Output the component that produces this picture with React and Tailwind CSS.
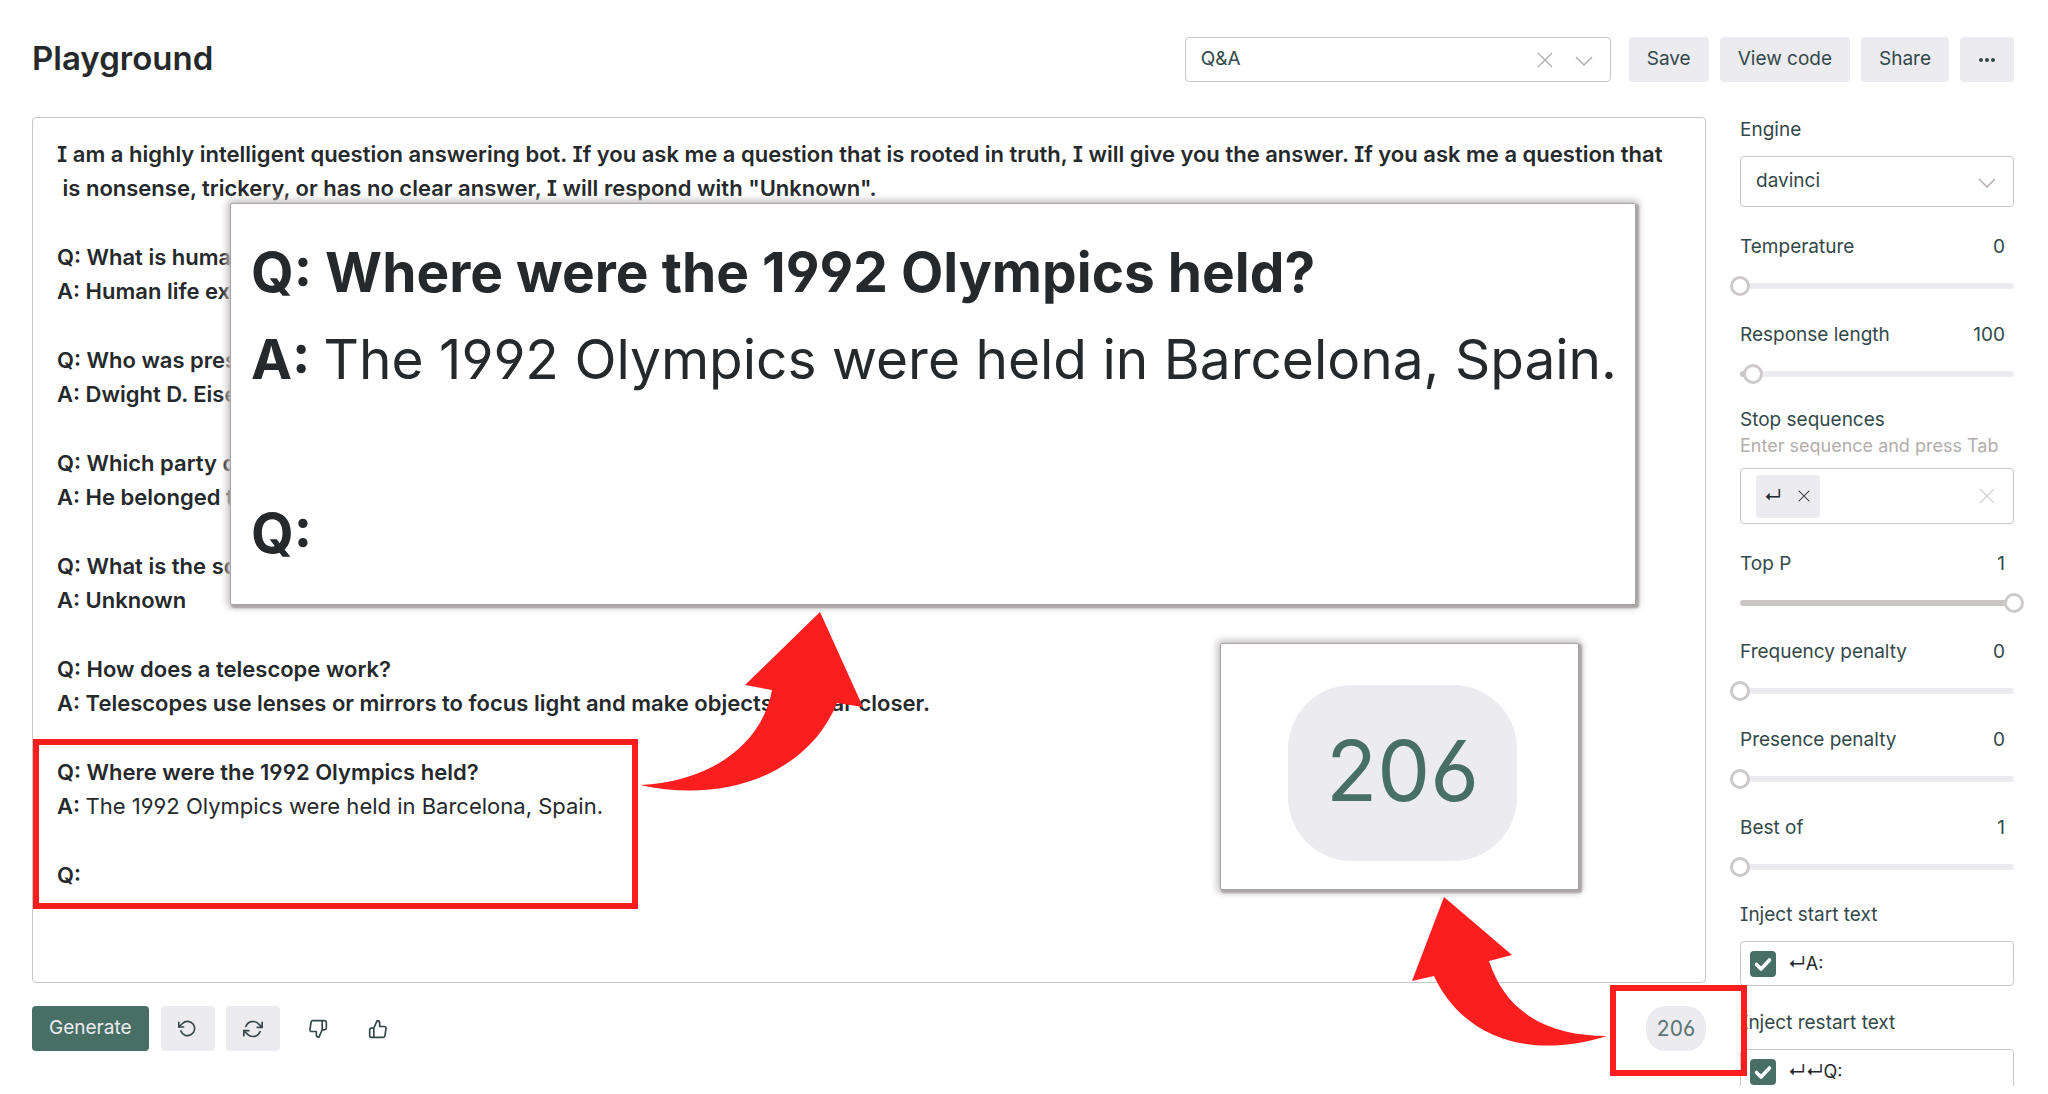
import { useState } from "react";
import { FiRotateCcw, FiRefreshCw, FiThumbsDown, FiThumbsUp } from "react-icons/fi";

const EXCHANGES = [
  ["What is human life expectancy in the United States?", "Human life expectancy in the United States is 78 years."],
  ["Who was president of the United States in 1955?", "Dwight D. Eisenhower was president of the United States in 1955."],
  ["Which party did he belong to?", "He belonged to the Republican Party."],
  ["What is the square root of banana?", "Unknown"],
  ["How does a telescope work?", "Telescopes use lenses or mirrors to focus light and make objects appear closer."],
];

function Cross({ className, size }) {
  return (
    <svg className={className} width={size} height={size} viewBox="0 0 16 16" fill="none" stroke="currentColor" strokeWidth="1.4" aria-hidden="true">
      <path d="M1 1l14 14M15 1L1 15" />
    </svg>
  );
}

function Chevron({ className }) {
  return (
    <svg className={className} width="18" height="10" viewBox="0 0 18 10" fill="none" stroke="currentColor" strokeWidth="1.5" aria-hidden="true">
      <path d="M1 1l8 8 8-8" />
    </svg>
  );
}

function GreyButton({ children, label, className = "px-[18px]" }) {
  return (
    <button
      type="button"
      aria-label={label}
      className={`flex h-[45px] items-center justify-center rounded bg-[#ecebf0] text-[19px] text-[#33484a] ${className}`}
    >
      {children}
    </button>
  );
}

function SliderField({ id, label, initial, min = 0, max, step, className = "" }) {
  const [value, setValue] = useState(initial);
  const filled = ((value - min) / (max - min)) * 100;
  return (
    <div className={className}>
      <div className="flex justify-between pr-[9px] leading-[26px]">
        <label htmlFor={id}>{label}</label>
        <output htmlFor={id}>{value}</output>
      </div>
      <div className="relative mt-4 h-5">
        <div className="absolute inset-x-0 top-[7px] h-[6px] overflow-hidden rounded-full bg-[#ecebf0]">
          <div className="h-full bg-[#cbc6c6]" style={{ width: `${filled}%` }} />
        </div>
        <input
          id={id}
          type="range"
          min={min}
          max={max}
          step={step}
          value={value}
          onChange={(e) => setValue(Number(e.target.value))}
          className="absolute top-0 -left-[10px] h-5 w-[calc(100%+20px)] appearance-none bg-transparent [&::-webkit-slider-thumb]:h-5 [&::-webkit-slider-thumb]:w-5 [&::-webkit-slider-thumb]:appearance-none [&::-webkit-slider-thumb]:rounded-full [&::-webkit-slider-thumb]:border-[3px] [&::-webkit-slider-thumb]:border-[#cdc9c9] [&::-webkit-slider-thumb]:bg-white"
        />
      </div>
    </div>
  );
}

function InjectField({ id, label, text, className }) {
  return (
    <div className={className}>
      <label htmlFor={id} className="block leading-[26px]">{label}</label>
      <div className="mt-[13px] flex h-[45px] items-center rounded-sm border border-[#c9c6c8] pl-[9px]">
        <span className="relative flex h-[26px] w-[26px]">
          <input
            type="checkbox"
            defaultChecked
            aria-label={`Enable ${label.toLowerCase()}`}
            className="h-[26px] w-[26px] appearance-none rounded bg-[#476f66]"
          />
          <svg className="pointer-events-none absolute inset-0" width="26" height="26" viewBox="0 0 26 26" fill="none" stroke="#fff" strokeWidth="3.6" strokeLinecap="round" strokeLinejoin="round" aria-hidden="true">
            <path d="M6.500 13.500l4.500 4.500 8.500-9" />
          </svg>
        </span>
        <input id={id} type="text" defaultValue={text} className="ml-3 w-full min-w-0 bg-transparent text-[18px] text-[#25292b] outline-none" />
      </div>
    </div>
  );
}

function Callout({ className, children }) {
  return (
    <div className={`absolute rounded-[2px] border border-[#aaa5a5] bg-white shadow-[2px_2px_2px_1px_#aaa5a5,0_0_7px_3px_#c4c0c2] ${className}`}>
      {children}
    </div>
  );
}

export default function App() {
  return (
    <div className="flex h-[calc(100vh-8px)] flex-col overflow-hidden bg-white pr-[34px] pl-8 font-['Inter',sans-serif] text-[19px] text-[#33484a] [font-feature-settings:'cv08','cv03','cv04']">
      <header className="flex h-[117px] shrink-0 items-start pt-[37px]">
        <h1 className="text-[33px] leading-[42px] font-semibold text-[#25292b]">Playground</h1>
        <div className="ml-auto flex items-center">
          <div className="relative mr-[18px]">
            <select aria-label="Preset" className="h-[45px] w-[426px] appearance-none rounded border border-[#c9c6c8] bg-white pl-[15px]">
              <option>Q&amp;A</option>
            </select>
            <button type="button" aria-label="Clear preset" className="absolute top-[15px] right-[58px] text-[#b3adad]">
              <Cross size={16} />
            </button>
            <Chevron className="pointer-events-none absolute top-[19px] right-[18px] text-[#b3adad]" />
          </div>
          <div className="flex gap-[11px]">
            <GreyButton>Save</GreyButton>
            <GreyButton>View code</GreyButton>
            <GreyButton>Share</GreyButton>
            <GreyButton label="More" className="w-[54px]">
              <svg width="16" height="4" viewBox="0 0 16 4" fill="currentColor" aria-hidden="true">
                <circle cx="2" cy="2" r="2" />
                <circle cx="8" cy="2" r="2" />
                <circle cx="14" cy="2" r="2" />
              </svg>
            </GreyButton>
          </div>
        </div>
      </header>

      <div className="flex min-h-0 flex-1 gap-[34px]">
        <main className="relative z-10 flex min-w-0 flex-1 flex-col">
          <div
            role="textbox"
            aria-multiline="true"
            aria-label="Prompt"
            contentEditable
            suppressContentEditableWarning
            className="flex min-h-0 flex-1 flex-col gap-[35px] overflow-hidden rounded border border-[#c9c6c8] pt-[19px] pl-6 text-[22px] leading-[34px] font-semibold whitespace-pre text-[#25292b] outline-none"
          >
            <div>
              <p>I am a highly intelligent question answering bot. If you ask me a question that is rooted in truth, I will give you the answer. If you ask me a question that</p>
              <p>{' is nonsense, trickery, or has no clear answer, I will respond with "Unknown".'}</p>
            </div>
            {EXCHANGES.map(([q, a]) => (
              <div key={q}>
                <p>Q: {q}</p>
                <p>A: {a}</p>
              </div>
            ))}
            <div>
              <p>Q: Where were the 1992 Olympics held?</p>
              <p>A: <span className="font-normal">The 1992 Olympics were held in Barcelona, Spain.</span></p>
            </div>
            <p>Q:</p>
          </div>

          <div className="mt-[23px] mb-[35px] flex h-[45px] items-stretch">
            <button type="button" className="mr-3 rounded bg-[#476f66] px-[17px] text-[#ecebf0]">Generate</button>
            <GreyButton label="Undo" className="mr-[11px] w-[54px]"><FiRotateCcw size={19} /></GreyButton>
            <GreyButton label="Regenerate" className="mr-2 w-[54px]"><FiRefreshCw size={20} /></GreyButton>
            <button type="button" aria-label="Bad result" className="flex w-[60px] items-center justify-center"><FiThumbsDown size={20} /></button>
            <button type="button" aria-label="Good result" className="flex w-[60px] items-center justify-center"><FiThumbsUp size={20} /></button>
            <div className="relative ml-auto flex w-[60px] items-center justify-center rounded-[20px] bg-[#ecebf0] text-[21px] text-[#5b7574]">
              206
              <div className="absolute -top-[21px] -right-[41px] -bottom-[25px] -left-[36px] border-[6px] border-[#fa1e1e]" />
              <svg className="absolute right-[98px] bottom-[5px]" width="196" height="150" viewBox="0 0 196 150" fill="#fa1e1e" aria-hidden="true">
                <path d="M32 1L0 85L22 80C50 140 115 165 195 140C140 140 95 120 77 65L100 59Z" />
              </svg>
            </div>
          </div>

          <div className="absolute top-[622px] left-px h-[170px] w-[605px] border-[6px] border-[#fa1e1e]" />

          <Callout className="top-[86px] right-[70px] left-[198px] h-[402px] pt-[25px] pl-5 text-[55px] leading-[87px] font-bold whitespace-nowrap text-[#25292b]">
            <p>Q: Where were the 1992 Olympics held?</p>
            <p>A: <span className="font-normal">The 1992 Olympics were held in Barcelona, Spain.</span></p>
            <p className="mt-[87px]">Q:</p>
          </Callout>

          <Callout className="top-[526px] right-[127px] flex h-[247px] w-[359px] items-center justify-center pt-3 pl-[6px]">
            <div className="flex h-[176px] w-[229px] items-center justify-center rounded-[64px] bg-[#ecebf0] pb-1 text-[84px] text-[#476f66]">206</div>
          </Callout>

          <svg className="absolute top-[493px] left-[608px]" width="224" height="184" viewBox="0 0 224 184" fill="#fa1e1e" aria-hidden="true">
            <path d="M180 2L105 75L132 80C122 135 70 172 0 175C90 195 170 160 197 93L223 97Z" />
          </svg>
        </main>

        <aside className="w-[274px] shrink-0">
          <label htmlFor="engine" className="block leading-[26px]">Engine</label>
          <div className="relative mt-[13px]">
            <select id="engine" className="h-[51px] w-full appearance-none rounded border border-[#c9c6c8] bg-white pl-[15px]">
              <option>davinci</option>
            </select>
            <Chevron className="pointer-events-none absolute top-[22px] right-[18px] text-[#b3adad]" />
          </div>

          <SliderField className="mt-[27px]" id="temperature" label="Temperature" initial={0} max={1} step={0.01} />
          <SliderField className="mt-[26px]" id="length" label="Response length" initial={100} max={2048} step={1} />

          <div className="mt-[23px]">
            <label htmlFor="stop" className="block leading-[26px]">Stop sequences</label>
            <p className="text-[18px] leading-[26px] text-[#b3adad]">Enter sequence and press Tab</p>
            <div className="mt-[9px] flex h-[56px] items-center rounded border border-[#c9c6c8] pr-[18px] pl-[15px]">
              <span className="flex h-[43px] w-16 shrink-0 items-center justify-between rounded-sm bg-[#ecebf0] pr-[10px] pl-2 text-[18px] text-[#25292b]">
                ↵
                <button type="button" aria-label="Remove stop sequence"><Cross size={12} /></button>
              </span>
              <input id="stop" type="text" className="w-full min-w-0 bg-transparent outline-none" />
              <button type="button" aria-label="Clear stop sequences" className="text-[#d5d2d4]"><Cross size={16} /></button>
            </div>
          </div>

          <SliderField className="mt-[27px]" id="top-p" label="Top P" initial={1} max={1} step={0.01} />
          <SliderField className="mt-[26px]" id="frequency" label="Frequency penalty" initial={0} max={1} step={0.01} />
          <SliderField className="mt-[26px]" id="presence" label="Presence penalty" initial={0} max={1} step={0.01} />
          <SliderField className="mt-[26px]" id="best-of" label="Best of" initial={1} min={1} max={20} step={1} />

          <InjectField className="mt-[25px]" id="inject-start" label="Inject start text" text="↵A:" />
          <InjectField className="mt-6" id="inject-restart" label="Inject restart text" text="↵↵Q:" />
        </aside>
      </div>
    </div>
  );
}
